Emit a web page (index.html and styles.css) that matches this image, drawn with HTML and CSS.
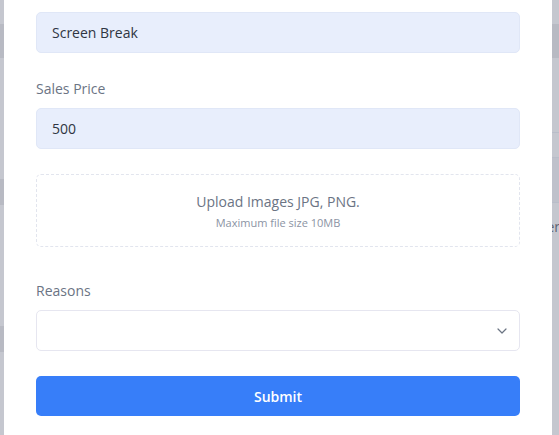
FILE: index.html
```html
<!DOCTYPE html>
<html lang="en">
<head>
<meta charset="utf-8">
<title>Sale form</title>
<link rel="stylesheet" href="styles.css">
</head>
<body>
<div class="page">
  <div class="strip strip-left">
    <div class="band" style="height:24px"></div>
    <div class="band dark" style="height:34px"></div>
    <div class="band" style="height:121px"></div>
    <div class="band dark" style="height:26px"></div>
    <div class="band" style="height:121px"></div>
    <div class="band dark" style="height:26px"></div>
    <div class="band fill"></div>
  </div>
  <main class="modal">
    <form class="form">
      <div class="field-input filled">Screen Break</div>
      <label class="label">Sales Price</label>
      <div class="field-input filled">500</div>
      <div class="upload">
        <div class="upload-title">Upload Images JPG, PNG.</div>
        <div class="upload-sub">Maximum file size 10MB</div>
      </div>
      <label class="label label-reasons">Reasons</label>
      <div class="field-input select">
        <svg class="chevron" width="10" height="6" viewBox="0 0 10 6" aria-hidden="true"><path d="M1 1 L5 5 L9 1" fill="none" stroke="#6b7483" stroke-width="1.2" stroke-linecap="round" stroke-linejoin="round"/></svg>
      </div>
      <button type="button" class="submit">Submit</button>
    </form>
  </main>
  <div class="strip strip-right">
    <div class="band" style="height:24px"></div>
    <div class="band dark" style="height:34px"></div>
    <div class="band" style="height:74px"></div>
    <div class="band line" style="height:25px"></div>
    <div class="band mid" style="height:45px"></div>
    <div class="band line peek" style="height:233px"><span class="peek-text">er</span></div>
  </div>
</div>
</body>
</html>
```
FILE: styles.css
```css
* { box-sizing: border-box; }
html, body { margin: 0; padding: 0; }
body {
  width: 559px;
  height: 435px;
  overflow: hidden;
  background: #c5c7cf;
  font-family: "Open Sans", "Liberation Sans", sans-serif;
}
.page {
  display: grid;
  grid-template-columns: 4px 548px 7px;
  height: 435px;
}
.strip { display: flex; flex-direction: column; overflow: hidden; }
.band { background: #c5c7cf; flex: none; }
.band.dark { background: #b8bac3; }
.band.mid { background: #bfc1cb; border-top: 1px solid #b9bdc9; }
.band.line { border-top: 1px solid #b9bdc9; }
.band.fill { flex: 1; }
.peek { position: relative; }
.peek-text {
  position: absolute;
  top: 14px;
  right: -1px;
  font-size: 14px;
  color: #5d6372;
}
.modal {
  background: #ffffff;
  padding: 12px 32px 0 32px;
}
.form { display: flex; flex-direction: column; }
.field-input {
  height: 41px;
  border-radius: 5px;
  display: flex;
  align-items: center;
  padding: 0 15px;
  font-size: 14px;
  color: #2f3542;
}
.field-input.filled {
  background: #e8eefc;
  border: 1px solid #e0e7f7;
}
.label {
  font-size: 14px;
  line-height: 20px;
  color: #6b7484;
  margin: 26px 0 9px;
}
.label-reasons { margin-top: 34px; }
.upload {
  margin-top: 25px;
  height: 73px;
  border: 1px dashed #e2e5ee;
  border-radius: 5px;
  display: flex;
  flex-direction: column;
  align-items: center;
  justify-content: center;
}
.upload-title { font-size: 14px; line-height: 20px; color: #6b7484; }
.upload-sub { font-size: 11px; line-height: 15px; color: #8b93a3; margin-top: 3px; }
.field-input.select {
  background: #ffffff;
  border: 1px solid #e6e6f0;
  justify-content: flex-end;
  padding-right: 12px;
}
.chevron { display: block; margin-top: 1px; }
.submit {
  margin-top: 25px;
  height: 40px;
  border: none;
  border-radius: 5px;
  background: #377ef9;
  color: #ffffff;
  font-family: inherit;
  font-size: 14px;
  font-weight: 600;
}
```
